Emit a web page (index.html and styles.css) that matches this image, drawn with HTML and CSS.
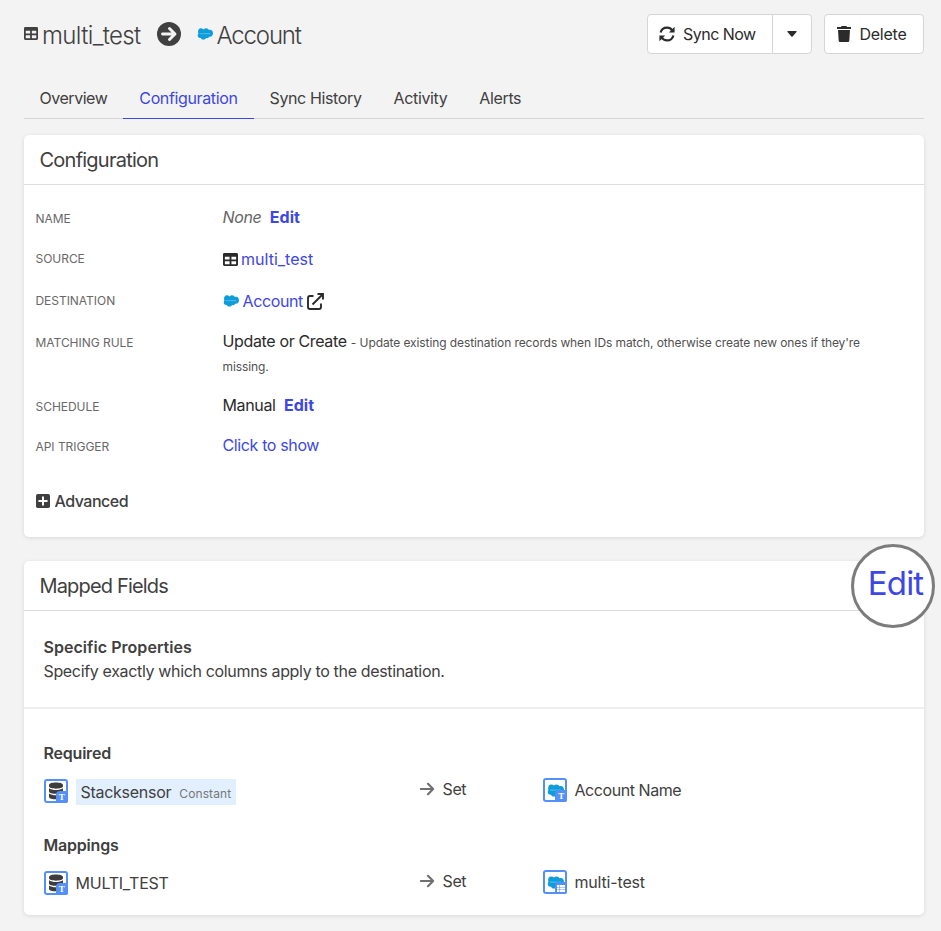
FILE: index.html
```html
<!DOCTYPE html>
<html lang="en">
<head>
<meta charset="utf-8">
<title>multi_test to Account</title>
<link rel="stylesheet" href="styles.css">
</head>
<body>
<svg class="sprite" aria-hidden="true">
  <symbol id="table" viewBox="0 32 512 448" preserveAspectRatio="none"><path d="M464 32H48C21 32 0 53 0 80v352c0 27 21 48 48 48h416c27 0 48-21 48-48V80c0-27-21-48-48-48zM224 416H64v-96h160zm0-160H64v-96h160zm224 160H288v-96h160zm0-160H288v-96h160z"/></symbol>
  <symbol id="cloud" viewBox="0 0 46 34" preserveAspectRatio="none"><path fill="#0d9ddb" d="M19 4c2-2 4-3 7-3 4 0 7 2 8 5 6-3 12 2 12 9 0 6-4 11-11 10-1 3-5 5-9 3-3 7-13 6-15 0-5 1-9-2-9-7 0-2 1-4 2-5C1 8 5 1 11 1c3 0 6 1 8 3z"/><path d="M8 16h30" fill="none" stroke="#8dd0ef" stroke-width="2.500" stroke-dasharray="2 1"/></symbol>
  <symbol id="arrow" viewBox="0 0 16 14"><path d="M1 7h13M8.500 1.500 14 7l-5.500 5.500" fill="none" stroke="currentColor" stroke-width="2.300" stroke-linecap="round" stroke-linejoin="round"/></symbol>
  <symbol id="database" viewBox="0 0 16 18"><path d="M1 3c0-3.300 14-3.300 14 0v1.300C15 7.500 1 7.500 1 4.300zM1 6.200c3 2.400 11 2.400 14 0v3.300c0 3.100-14 3.100-14 0zM1 11.500c3 2.400 11 2.400 14 0V15c0 3.100-14 3.100-14 0z"/></symbol>
</svg>

<header class="page-head">
  <h1 class="route">
    <svg class="ico-table"><use href="#table"/></svg>
    <span class="route-from">multi_test</span>
    <svg class="route-arrow" viewBox="0 0 24 24"><circle cx="12" cy="12" r="12"/><path d="M5.500 12h12M12.500 6.500 18 12l-5.500 5.500" fill="none" stroke="#f3f3f3" stroke-width="2.900" stroke-linecap="round" stroke-linejoin="round"/></svg>
    <svg class="ico-cloud"><use href="#cloud"/></svg>
    <span class="route-to">Account</span>
  </h1>
  <div class="actions">
    <div class="btn-group">
      <button class="btn btn-sync"><svg class="ico16" viewBox="0 0 16 16"><path d="M1.600 6.600C2.400 3.500 5 1.600 8 1.600c2.300 0 4.200 1 5.300 2.900M14.400 9.400C13.600 12.500 11 14.400 8 14.400c-2.300 0-4.200-1-5.300-2.900" fill="none" stroke="currentColor" stroke-width="2.200"/><path d="M15.600.8v5.700H9.900zM.4 15.200V9.500h5.700z"/></svg><span>Sync Now</span></button>
      <button class="btn btn-caret" aria-label="More"><svg viewBox="0 0 10 6"><path d="M.8 0h8.400q.8.300.3 1L5.600 5.400q-.6.600-1.200 0L.5 1Q0 .3.800 0z"/></svg></button>
    </div>
    <button class="btn btn-delete"><svg class="ico-trash" viewBox="0 0 14 16"><path d="M0 1h4l.5-1h5l.5 1h4v2H0zM1 4h12l-.7 10.700q-.1 1.300-1.400 1.300H3.100q-1.300 0-1.400-1.300z"/></svg><span>Delete</span></button>
  </div>
</header>

<nav class="tabs">
  <a class="tab">Overview</a><a class="tab active">Configuration</a><a class="tab">Sync History</a><a class="tab">Activity</a><a class="tab">Alerts</a>
</nav>

<section class="card config">
  <h2 class="card-title">Configuration</h2>
  <dl class="props">
    <dt class="down">Name</dt><dd class="tall"><em>None</em><a class="edit">Edit</a></dd>
    <dt class="up">Source</dt><dd class="tall"><svg class="ico-table dark"><use href="#table"/></svg><a class="src">multi_test</a></dd>
    <dt class="up">Destination</dt><dd><svg class="ico-cloud"><use href="#cloud"/></svg><a class="dest">Account</a><svg class="ico-ext" viewBox="0 0 17 17"><path d="M6.500 3H3Q1 3 1 5v9q0 2 2 2h9q2 0 2-2v-3.500M5.500 11.500 15 2M10.500 1H16v5.500" fill="none" stroke="currentColor" stroke-width="1.900"/></svg></dd>
    <dt class="down">Matching Rule</dt><dd class="rule">Update or Create <small>- Update existing destination records when IDs match, otherwise create new ones if they're missing.</small></dd>
    <dt class="down">Schedule</dt><dd>Manual<a class="edit">Edit</a></dd>
    <dt class="down">API Trigger</dt><dd><a>Click to show</a></dd>
  </dl>
  <div class="advanced"><svg viewBox="0 0 14 14"><rect width="14" height="14" rx="1.800"/><path d="M7 3.200v7.600M3.200 7h7.600" stroke="#fff" stroke-width="2" stroke-linecap="round"/></svg><span>Advanced</span></div>
</section>

<section class="card mapped">
  <div class="card-title">
    <h2>Mapped Fields</h2>
    <a class="lens">Edit</a>
  </div>
  <div class="intro">
    <h3>Specific Properties</h3>
    <p>Specify exactly which columns apply to the destination.</p>
  </div>
  <div class="fields">
    <h3>Required</h3>
    <div class="map-row">
      <div class="cell from"><span class="field-ico"><svg class="db"><use href="#database"/></svg><i class="type">T</i></span><span class="constant">Stacksensor<small>Constant</small></span></div>
      <div class="cell set"><svg><use href="#arrow"/></svg>Set</div>
      <div class="cell to"><span class="field-ico"><svg class="sf"><use href="#cloud"/></svg><i class="type">T</i></span>Account Name</div>
    </div>
    <h3>Mappings</h3>
    <div class="map-row">
      <div class="cell from"><span class="field-ico"><svg class="db"><use href="#database"/></svg><i class="type">T</i></span><span class="column">MULTI_TEST</span></div>
      <div class="cell set"><svg><use href="#arrow"/></svg>Set</div>
      <div class="cell to"><span class="field-ico"><svg class="sf"><use href="#cloud"/></svg><i class="type"><svg class="grid" viewBox="0 0 8 7"><path fill="#fff" d="M0 0h2v2H0zM2.500 0H8v2H2.500zM0 2.500h2v2H0zM2.500 2.500H8v2H2.500zM0 5h2v2H0zM2.500 5H8v2H2.500z"/></svg></i></span><span class="column">multi-test</span></div>
    </div>
  </div>
</section>
</body>
</html>
```
FILE: styles.css
```css
* { box-sizing: border-box; }
body {
  margin: 0;
  padding: 14px 17px 0 24px;
  min-height: 931px;
  background: #f3f3f3;
  color: #404040;
  font: 16px/24px Inter, sans-serif;
  letter-spacing: -0.023em;
  overflow: hidden;
}
h1, h2, h3, p, dl, dd { margin: 0; }
svg { display: block; flex: none; fill: currentColor; }
.sprite { position: absolute; width: 0; height: 0; }
a { color: #3d47e4; }

.page-head { display: flex; justify-content: space-between; height: 40px; }
.route { display: flex; align-items: center; height: 41px; font-size: 24px; line-height: 32px; font-weight: 300; letter-spacing: -0.027em; }
.ico-table { width: 15px; height: 13px; margin-right: 3.500px; }
.route .ico-table { width: 14px; margin-right: 4px; margin-bottom: 2px; }
.ico-cloud { width: 16px; height: 12px; margin-right: 4px; }
.route .ico-cloud { margin-bottom: 1px; margin-left: -0.500px; }
.route-from { width: 115px; padding-top: 2px; }
.route-to { letter-spacing: -0.049em; padding-top: 2px; }
.route-arrow { width: 24px; height: 24px; margin-right: 16px; margin-bottom: 1px; }
.dark { color: #2b2b2b; }

.actions { display: flex; gap: 12px; }
.btn-group { display: flex; }
.btn {
  display: flex; align-items: center; height: 40px; padding: 0 11px;
  border: 1px solid #d5d5d5; border-radius: 4px; background: #fff;
  color: #2b2b2b; font: inherit; letter-spacing: -0.033em;
}
.btn-sync { width: 126px; border-radius: 4px 0 0 4px; gap: 8px; white-space: nowrap; }
.btn-caret { width: 40px; margin-left: -1px; border-radius: 0 4px 4px 0; justify-content: center; padding: 0 1px 0 0; }
.btn-caret svg { width: 10px; height: 6px; }
.btn-delete { width: 100px; gap: 9px; padding-left: 11.500px; letter-spacing: -0.016em; }
.ico16 { width: 16px; height: 16px; }
.ico-trash { width: 14px; height: 16px; }

.tabs { display: flex; height: 41px; margin: 24px 0 16px; border-bottom: 1px solid #d5d5d5; }
.tab { height: 41px; padding: 8px 16px; color: #404040; border-bottom: 1px solid transparent; }
.tab:first-child { padding-left: 15.500px; letter-spacing: -0.029em; }
.tab.active { color: #3d47e4; border-color: #3d47e4; }

.card { background: #fff; border-radius: 5px; box-shadow: 0 1px 4px rgba(0, 0, 0, .11); }
.card-title { height: 50px; padding: 0 15.500px; border-bottom: 1px solid #dedede; }
h2 { font-size: 20px; line-height: 50px; font-weight: 400; letter-spacing: -0.038em; }
.mapped h2 { letter-spacing: -0.042em; }
.config { height: 402px; margin-bottom: 24px; }
.props { display: grid; grid-template-columns: 187px 1fr; padding: 20px 56px 0 11.500px; }
dt { color: #686868; font-size: 12px; text-transform: uppercase; letter-spacing: -0.003em; }
.down { padding-top: 2px; }
.up { padding-top: 0; }
dd { display: flex; align-items: center; align-self: start; height: 24px; margin-bottom: 16px; color: #2b2b2b; }
.tall { margin-bottom: 18px; }
dd em { color: #666; }
.src { letter-spacing: 0.001em; }
.edit { margin-left: 8.500px; font-weight: 700; letter-spacing: 0; }
.rule { display: block; height: 48px; letter-spacing: -0.022em; }
.rule small { font-size: 12px; line-height: 16px; color: #505050; letter-spacing: -0.008em; }
.ico-ext { width: 17px; height: 17px; margin-left: 3.500px; }
.advanced { display: flex; align-items: center; gap: 5px; margin: 16px 0 0 11.500px; font-weight: 500; letter-spacing: -0.031em; }
.advanced svg { width: 14px; height: 14px; }

.mapped { height: 354px; }
.mapped .card-title { position: relative; }
.lens {
  position: absolute; right: -11px; top: -17px; width: 84px; height: 84px;
  border: 3px solid #7c7c7c; border-radius: 50%; background: #fff;
  font-size: 33px; line-height: 72px; text-align: center; letter-spacing: -0.025em; padding-left: 5px;
}
h3 { font-size: 16px; line-height: 24px; font-weight: 600; letter-spacing: -0.013em; }
.intro { height: 98px; padding: 24px 19.500px 0; border-bottom: 2px solid #eee; }
.intro h3 { letter-spacing: 0.003em; }
.intro p { letter-spacing: -0.0215em; }
.fields { padding: 32px 19.500px 0; }
.map-row { display: grid; grid-template-columns: 376.500px 123px 1fr; height: 26px; margin: 13px 0 29px; }
.cell { display: flex; align-items: center; height: 26px; }
.to { height: 24px; letter-spacing: -0.027em; }
.set { height: 22px; }
.set svg { width: 15px; height: 14px; margin-right: 7.500px; color: #707070; }
.field-ico {
  position: relative; width: 24px; height: 24px; margin-right: 8px;
  border: 2px solid #5490f8; border-radius: 3px; background: #fff;
}
.to .field-ico { margin-right: 7.500px; }
.field-ico .db { width: 16px; height: 18px; margin: 1px 0 0 2px; color: #3d3d3d; }
.field-ico .sf { width: 17px; height: 13px; margin: 4px 0 0 2px; }
.column { letter-spacing: -0.014em; }
.to .column { letter-spacing: -0.011em; }
.type {
  position: absolute; right: -2px; bottom: -2px; width: 12px; height: 12px;
  border-radius: 4px 0 2px; background: #5490f8; color: #fff;
  font: bold 9px/12px "Liberation Serif", serif; text-align: center;
}
.type .grid { width: 8px; height: 7px; margin: 3px 0 0 2px; }
.constant { height: 26px; padding: 1px 5px 0; background: #e2efff; margin-top: 2px; letter-spacing: -0.017em; }
.constant small { margin-left: 8px; font-size: 12px; color: #777; letter-spacing: 0.008em; }
```
